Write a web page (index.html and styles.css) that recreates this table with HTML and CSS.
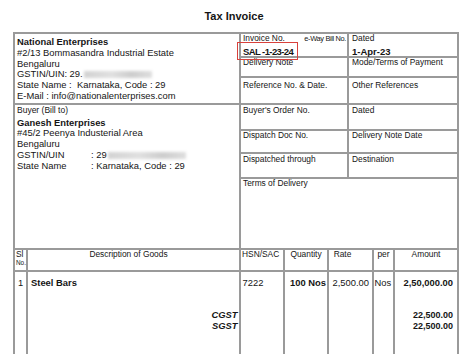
FILE: index.html
```html
<!DOCTYPE html>
<html>
<head>
<meta charset="utf-8">
<link rel="stylesheet" href="styles.css">
</head>
<body>
<div class="page">
  <h1 class="title">Tax Invoice</h1>
  <div class="invoice">
    <div class="top">
      <div class="seller">
        <div class="strong">National Enterprises</div>
        <div>#2/13 Bommasandra Industrial Estate</div>
        <div>Bengaluru</div>
        <div>GSTIN/UIN: 29.<span class="blur blur-seller"></span></div>
        <div>State Name :&nbsp; Karnataka, Code : 29</div>
        <div>E-Mail : info@nationalenterprises.com</div>
      </div>
      <div class="cell cell-l cell-split">
        <div class="lbl-row"><span>Invoice No.</span><span class="eway">e-Way Bill No.</span></div>
        <div class="val val-inv">SAL -1-23-24</div>
        <div class="highlight"></div>
      </div>
      <div class="cell cell-r cell-split">
        <div>Dated</div>
        <div class="val">1-Apr-23</div>
      </div>
      <div class="cell cell-l">Delivery Note</div>
      <div class="cell cell-r">Mode/Terms of Payment</div>
      <div class="cell cell-l row-ref">Reference No. &amp; Date.</div>
      <div class="cell cell-r row-ref">Other References</div>
      <div class="buyer">
        <div class="buyer-lbl">Buyer (Bill to)</div>
        <div class="strong">Ganesh Enterprises</div>
        <div>#45/2 Peenya Industerial Area</div>
        <div>Bengaluru</div>
        <div><span class="key">GSTIN/UIN</span>: 29<span class="blur blur-buyer"></span></div>
        <div><span class="key">State Name</span>: Karnataka, Code : 29</div>
      </div>
      <div class="cell cell-l row-order">Buyer's Order No.</div>
      <div class="cell cell-r row-order">Dated</div>
      <div class="cell cell-l">Dispatch Doc No.</div>
      <div class="cell cell-r">Delivery Note Date</div>
      <div class="cell cell-l row-disp">Dispatched through</div>
      <div class="cell cell-r row-disp">Destination</div>
      <div class="cell cell-l terms">Terms of Delivery</div>
    </div>
    <div class="goods">
      <div class="gh gh-sl"><div>Sl</div><div class="no">No.</div></div>
      <div class="gh gh-desc">Description of Goods</div>
      <div class="gh gh-hsn">HSN/SAC</div>
      <div class="gh gh-center">Quantity</div>
      <div class="gh gh-rate">Rate</div>
      <div class="gh gh-center">per</div>
      <div class="gh gh-center">Amount</div>

      <div class="gb gb-sl">1</div>
      <div class="gb gb-desc">
        <div class="strong item">Steel Bars</div>
        <div class="tax">CGST</div>
        <div class="tax">SGST</div>
      </div>
      <div class="gb gb-hsn">7222</div>
      <div class="gb gb-qty strong">100 Nos</div>
      <div class="gb gb-rate">2,500.00</div>
      <div class="gb gb-per">Nos</div>
      <div class="gb gb-amt">
        <div class="strong amt-main">2,50,000.00</div>
        <div class="strong amt-tax">22,500.00</div>
        <div class="strong amt-tax">22,500.00</div>
      </div>
    </div>
  </div>
</div>
</body>
</html>
```

FILE: styles.css
```css
html, body {
  margin: 0;
  padding: 0;
  height: 354px;
  overflow: hidden;
  background: #ffffff;
}

body {
  font-family: "Liberation Sans", Arial, sans-serif;
  color: #151515;
}

.page {
  padding: 9.5px 0 0 13px;
  width: 446px;
}

.title {
  margin: 0 0 9.5px 0;
  font-size: 11px;
  line-height: 13px;
  font-weight: bold;
  text-align: center;
  padding-right: 4px;
}

.invoice {
  width: 442px;
  border: 2px solid #9a9a9a;
  border-bottom: 0;
  background: #9a9a9a;
  display: flex;
  flex-direction: column;
  gap: 2px;
}

.top {
  display: grid;
  grid-template-columns: 224px 106px 108px;
  grid-template-rows: 22px 18px 25px 24px 21px 23px 69px;
  gap: 2px;
}

.top > div {
  background: #ffffff;
}

.seller {
  grid-column: 1;
  grid-row: 1 / 4;
  padding: 3px 2px 0 2px;
  font-size: 9.4px;
  line-height: 10.8px;
}

.buyer {
  grid-column: 1;
  grid-row: 4 / 8;
  padding: 0 2px;
  font-size: 9.4px;
  line-height: 10.8px;
}

.buyer-lbl {
  font-size: 8.5px;
  line-height: 10px;
  margin-bottom: 2.6px;
}

.key {
  display: inline-block;
  width: 74px;
}

.strong {
  font-weight: bold;
}

.blur {
  display: inline-block;
  height: 7px;
  vertical-align: -1px;
  background: linear-gradient(90deg, #d2d2d2, #e0e0e0 40%, #cdcdcd 70%, #dedede);
  filter: blur(1.5px);
}

.blur-seller {
  width: 68px;
  margin-left: 1px;
}

.blur-buyer {
  width: 78px;
  margin-left: 1px;
}

.cell {
  font-size: 8.4px;
  line-height: 9px;
  position: relative;
}

.cell-l {
  grid-column: 2;
  padding: 0 2px;
}

.cell-r {
  grid-column: 3;
  padding: 0 3px;
}

.row-ref {
  padding-top: 3px;
}

.row-order {
  padding-top: 1px;
}

.row-disp {
  padding-top: 1px;
}

.terms {
  grid-column: 2 / 4;
}

.cell-split {
  display: flex;
  flex-direction: column;
  justify-content: space-between;
}

.lbl-row {
  display: flex;
  justify-content: space-between;
  align-items: baseline;
}

.eway {
  font-size: 7.4px;
  letter-spacing: -0.35px;
  margin-right: -1px;
}

.val {
  font-size: 9.5px;
  line-height: 9px;
  font-weight: bold;
}

.val-inv {
  letter-spacing: -0.6px;
}

.highlight {
  position: absolute;
  z-index: 2;
  left: -4px;
  top: 8px;
  width: 59px;
  height: 16px;
  border: 1.5px solid #d8413c;
}

.goods {
  display: grid;
  grid-template-columns: 11px 211px 42px 42px 43px 19px 62px;
  grid-template-rows: 20px 82px;
  gap: 2px;
}

.goods > div {
  background: #ffffff;
}

.gh {
  font-size: 8.4px;
  line-height: 9px;
}

.gh-sl {
  padding-left: 1px;
}

.gh-sl .no {
  font-size: 6.4px;
  line-height: 8px;
}

.gh-desc {
  text-align: center;
  padding-right: 10px;
}

.gh-hsn {
  padding-left: 1px;
}

.gh-center {
  text-align: center;
}

.gh-rate {
  text-align: center;
  padding-right: 16px;
}

.gb {
  font-size: 9.4px;
  line-height: 10.8px;
  padding-top: 5.6px;
}

.gb-sl {
  text-align: center;
}

.gb-desc {
  padding-left: 3px;
  padding-right: 1.5px;
}

.item {
  margin-bottom: 21.6px;
}

.tax {
  text-align: right;
  font-weight: bold;
  font-style: italic;
}

.gb-hsn {
  padding-left: 1.5px;
}

.gb-qty {
  text-align: right;
  padding-right: 1px;
}

.gb-rate {
  text-align: right;
  padding-right: 3px;
}

.gb-per {
  padding-left: 0.5px;
}

.gb-amt {
  text-align: right;
  padding-right: 4px;
}

.amt-main {
  margin-bottom: 21.6px;
}

.amt-tax {
  font-size: 9px;
}
```
